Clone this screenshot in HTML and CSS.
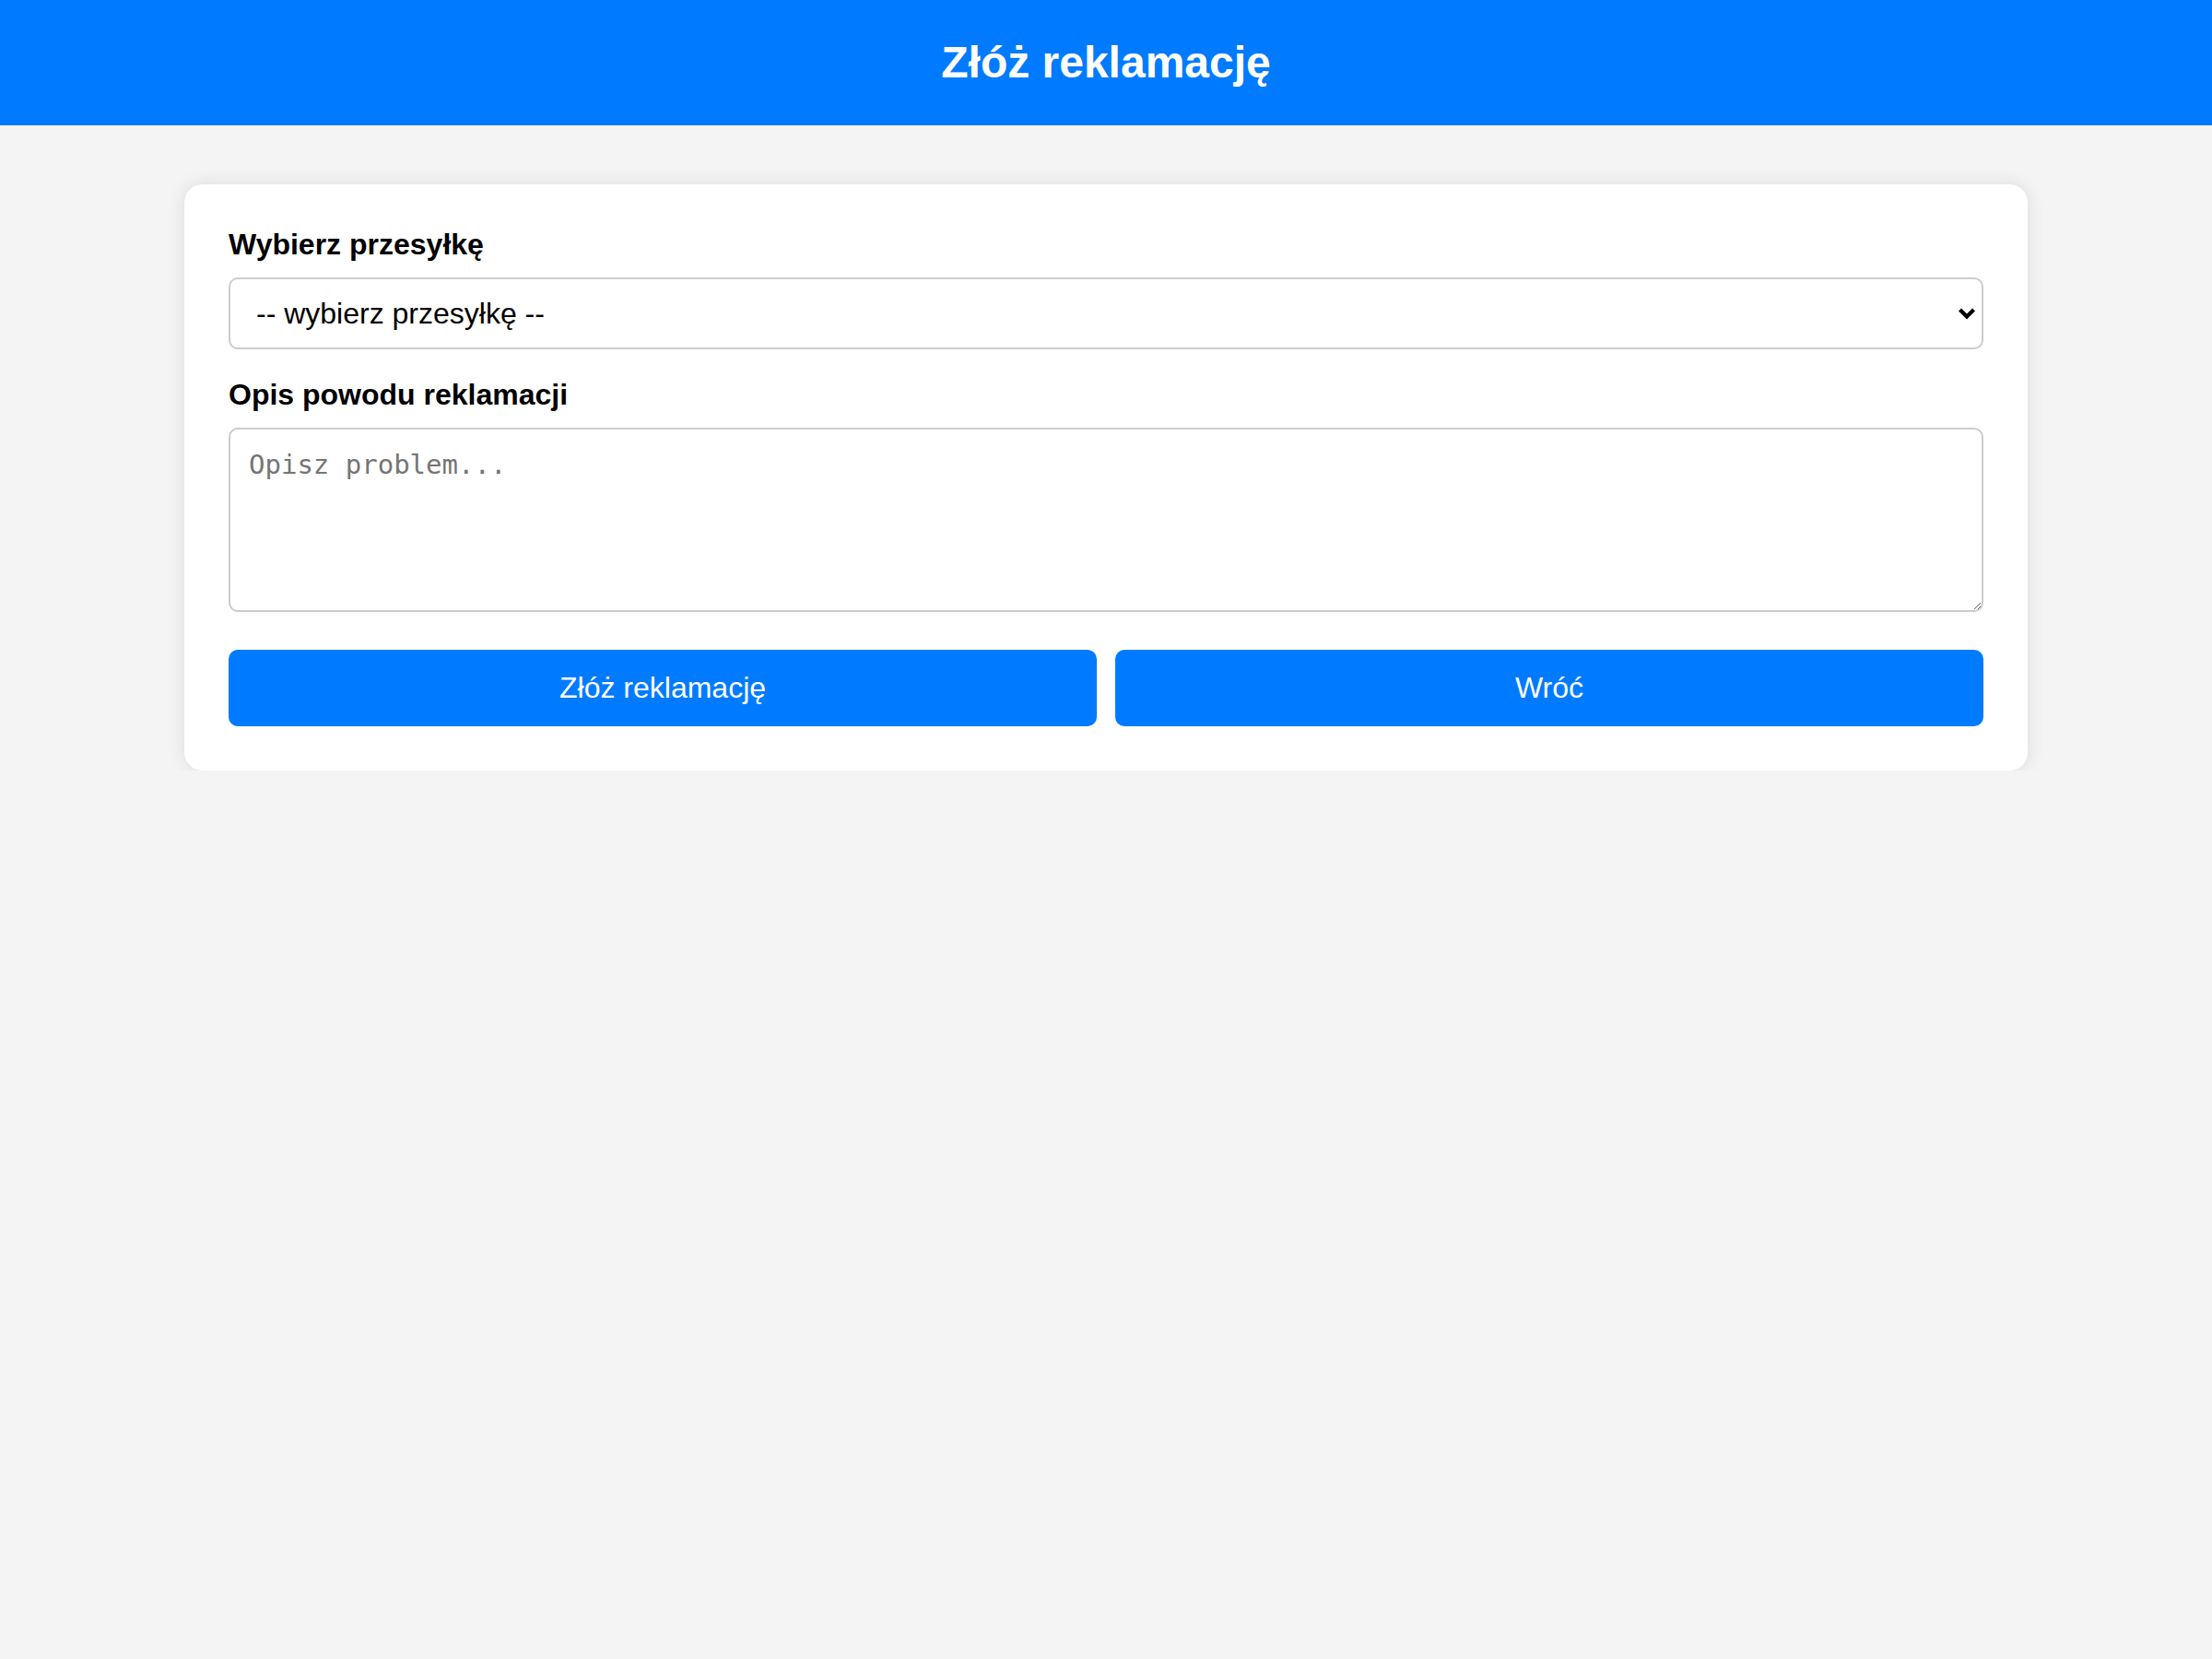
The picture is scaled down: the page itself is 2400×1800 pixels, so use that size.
FILE: index.html
```html
<!DOCTYPE html>
<html lang="pl">
<head>
<meta charset="utf-8">
<title>Złóż reklamację</title>
<link rel="stylesheet" href="styles.css">
</head>
<body>
<header class="top-bar">
  <h1 class="top-title">Złóż reklamację</h1>
</header>
<main class="container">
  <form class="card">
    <label class="field-label" for="shipment">Wybierz przesyłkę</label>
    <div class="select-wrap">
      <select id="shipment" class="select">
        <option>-- wybierz przesyłkę --</option>
      </select>
      <svg class="select-arrow" width="20" height="14" viewBox="0 0 20 14" aria-hidden="true">
        <path d="M2.5 3 L10 10.5 L17.5 3" fill="none" stroke="#000" stroke-width="4.2"/>
      </svg>
    </div>
    <label class="field-label field-label-gap" for="desc">Opis powodu reklamacji</label>
    <textarea id="desc" class="textarea" placeholder="Opisz problem..."></textarea>
    <div class="actions">
      <button type="button" class="btn">Złóż reklamację</button>
      <button type="button" class="btn">Wróć</button>
    </div>
  </form>
</main>
</body>
</html>
```

FILE: styles.css
```css
* {
  box-sizing: border-box;
}

body {
  margin: 0;
  background: #f4f4f4;
  font-family: "Liberation Sans", Arial, sans-serif;
  color: #000;
}

.top-bar {
  background: #007bff;
  color: #fff;
  padding: 40px 0;
  text-align: center;
}

.top-title {
  margin: 0;
  font-size: 48px;
  font-weight: bold;
  line-height: 56px;
}

.container {
  max-width: 2000px;
  margin: 64px auto 0;
}

.card {
  background: #fff;
  border-radius: 20px;
  padding: 47px 48px 48px;
  box-shadow: 0 0 20px rgba(0, 0, 0, 0.1);
  display: flex;
  flex-direction: column;
}

.field-label {
  display: block;
  font-size: 32px;
  font-weight: bold;
  line-height: 36.8px;
  margin-bottom: 17px;
}

.field-label-gap {
  margin-top: 31px;
  margin-bottom: 17px;
}

.select-wrap {
  position: relative;
}

.select {
  display: block;
  width: 100%;
  height: 78px;
  appearance: none;
  -webkit-appearance: none;
  background: #fff;
  border: 2px solid #ccc;
  border-radius: 10px;
  padding: 0 60px 0 28px;
  font-family: "Liberation Sans", Arial, sans-serif;
  font-size: 32px;
  color: #000;
}

.select-arrow {
  position: absolute;
  right: 8px;
  top: 32px;
  pointer-events: none;
}

.textarea {
  display: block;
  width: 100%;
  height: 200px;
  border: 2px solid #ccc;
  border-radius: 10px;
  padding: 21px 20px;
  font-family: "DejaVu Sans Mono", monospace;
  font-size: 29px;
  color: #000;
  background: #fff;
}

.textarea::placeholder {
  color: #757575;
}

.actions {
  display: flex;
  gap: 20px;
  margin-top: 41px;
}

.btn {
  flex: 1;
  height: 83px;
  border: none;
  border-radius: 10px;
  background: #007bff;
  color: #fff;
  font-family: "Liberation Sans", Arial, sans-serif;
  font-size: 32px;
  padding: 0;
}
```
